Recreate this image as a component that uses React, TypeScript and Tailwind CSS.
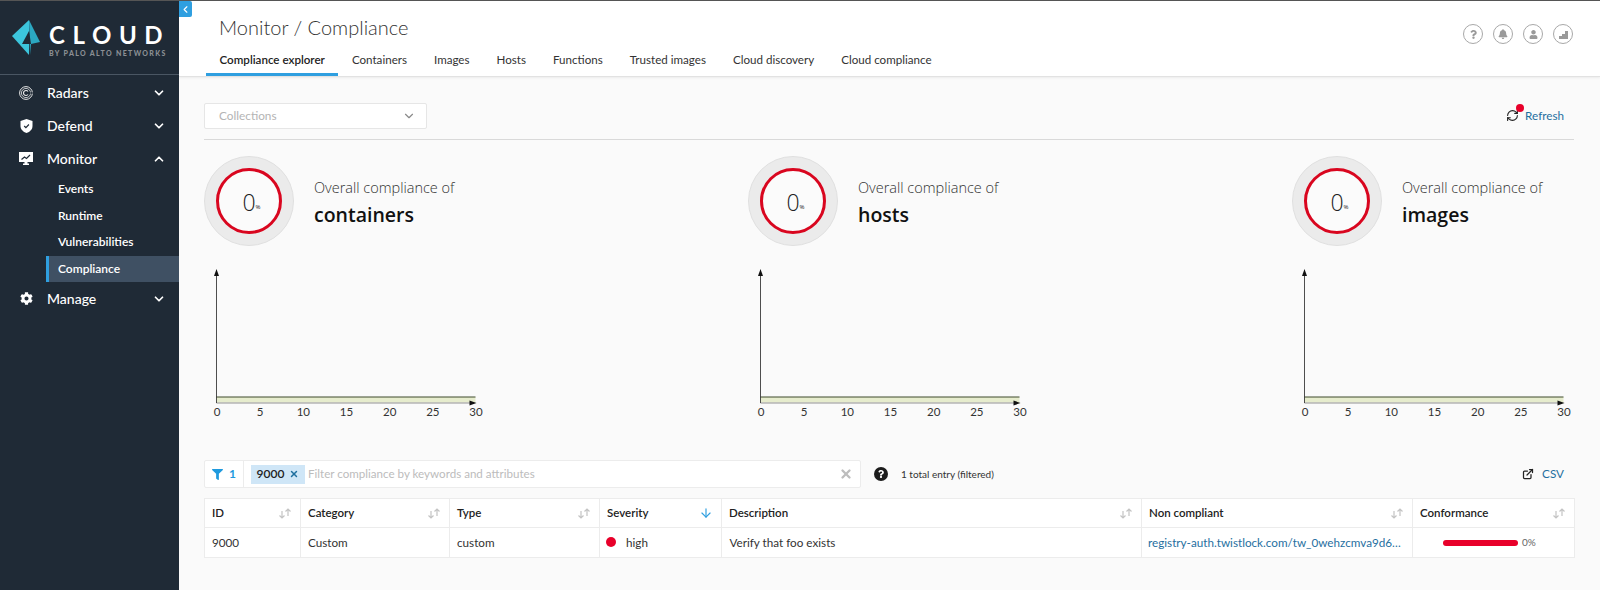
import { ChevronDown, ChevronLeft, ChevronUp, ArrowDown, RefreshCw, X, ExternalLink } from "lucide-react";
import { FaBell, FaCog, FaFilter, FaQuestion, FaUser } from "react-icons/fa";

const tabs = ["Compliance explorer", "Containers", "Images", "Hosts", "Functions", "Trusted images", "Cloud discovery", "Cloud compliance"];
const ticks = [0, 5, 10, 15, 20, 25, 30];

function RadarIcon() {
  return (
    <svg width="14" height="14" viewBox="0 0 14 14" fill="none" stroke="#e8e8e8">
      <circle cx="7" cy="7" r="6.4" strokeWidth="1" />
      <circle cx="7" cy="7" r="4.6" strokeWidth="0.8" />
      <path d="M9 5.5A2.5 2.5 0 1 0 9 8.5" strokeWidth="1.2" />
      <path d="M8 7h6" strokeWidth="1.2" stroke="#1f2a36" />
    </svg>
  );
}

function ShieldIcon() {
  return (
    <svg width="13" height="14" viewBox="0 0 13 14">
      <path d="M6.5 0 12.5 2v5c0 3.5-2.6 5.8-6 7-3.4-1.2-6-3.5-6-7V2z" fill="#fff" />
      <path d="M4.2 7l1.7 1.7 3-3.2" fill="none" stroke="#1f2a36" strokeWidth="1.2" />
    </svg>
  );
}

function MonitorIcon() {
  return (
    <svg width="14" height="13" viewBox="0 0 14 13">
      <path d="M0 0h14v10H8.5v1.5H10V13H4v-1.5h1.5V10H0z" fill="#fff" />
      <path d="M2.5 7.5 5.5 5l2 1.5 3.5-3.5" fill="none" stroke="#1f2a36" strokeWidth="1.2" />
    </svg>
  );
}

function SortIcon() {
  return (
    <svg width="14" height="11" viewBox="0 0 14 11" fill="none" stroke="#c4c4c4" strokeWidth="1.2">
      <path d="M4 3v7M1.5 7.5 4 10l2.5-2.5" />
      <path d="M10 8V1M7.5 3.5 10 1l2.5 2.5" />
    </svg>
  );
}

function NavItem({ icon, label, open }: { icon: React.ReactNode; label: string; open?: boolean }) {
  return (
    <div className="flex h-[33px] items-center pl-[19px] pr-[13px] text-[14px] font-medium text-white">
      <span className="flex w-[14px] justify-center">{icon}</span>
      <span className="ml-[14px] flex-1">{label}</span>
      {open ? <ChevronUp size={14} strokeWidth={3} /> : <ChevronDown size={14} strokeWidth={3} />}
    </div>
  );
}

function SubItem({ label, active }: { label: string; active?: boolean }) {
  return (
    <div className={`ml-[46px] flex h-[26.5px] items-center text-[12px] font-semibold text-white ${active ? "border-l-[3px] border-[#2f9fe0] bg-[#3f5063] pl-[9px]" : "pl-[12px]"}`}>
      {label}
    </div>
  );
}

function HeaderIcon({ children }: { children: React.ReactNode }) {
  return (
    <span className="flex h-[20px] w-[20px] items-center justify-center rounded-full border border-[#a8a8a8] text-[#9a9a9a]">
      {children}
    </span>
  );
}

function Chart() {
  return (
    <svg width="282" height="150" viewBox="0 0 282 150" className="mt-[23px]">
      <rect x="12.5" y="128" width="259" height="6" fill="#e6eccd" />
      <line x1="12.5" y1="128" x2="271.5" y2="128" stroke="#3f4a2c" strokeWidth="1" />
      <line x1="12.5" y1="134" x2="269.5" y2="134" stroke="#b5b5b5" strokeWidth="1.5" />
      <line x1="12.5" y1="4" x2="12.5" y2="134" stroke="#222" strokeWidth="0.8" />
      <path d="M12.5 0 15 7h-5z" fill="#111" />
      <path d="M272.5 134 265.5 131.5v5z" fill="#111" />
      {ticks.map((t, i) => (
        <text key={t} x={13 + i * 43.17} y="147" textAnchor="middle" fontSize="11.5" fill="#333" fontFamily="Lato, sans-serif">
          {t}
        </text>
      ))}
    </svg>
  );
}

function ComplianceCard({ kind }: { kind: string }) {
  return (
    <div className="w-[282px]">
      <div className="flex items-center">
        <div className="flex h-[90px] w-[90px] items-center justify-center rounded-full border border-[#e0e0e0] bg-[#ebebeb]">
          <div className="flex h-[66px] w-[66px] items-center justify-center rounded-full border-[3px] border-[#d9061f] bg-[#fbfbfb] pl-[5px] pt-[3px] font-['Open_Sans',sans-serif] text-[#222]">
            <span className="text-[23px] font-light leading-none">0</span>
            <span className="mt-[8px] text-[6px] leading-none">%</span>
          </div>
        </div>
        <div className="ml-[20px] pt-[4px] font-['Open_Sans',sans-serif]">
          <div className="text-[14.5px] font-light leading-[22px] text-[#333]">Overall compliance of</div>
          <div className="mt-[2px] text-[19.5px] font-semibold leading-[28px] text-[#111]">{kind}</div>
        </div>
      </div>
      <Chart />
    </div>
  );
}

function Th({ label, w, children }: { label: string; w: string; children?: React.ReactNode }) {
  return (
    <th className={`${w} h-[29px] border border-[#ececec] pl-[7px] pr-[8px] text-left text-[11.5px] font-semibold text-[#222]`}>
      <div className="flex items-center justify-between">
        <span>{label}</span>
        {children ?? <SortIcon />}
      </div>
    </th>
  );
}

export default function App() {
  return (
    <div className="relative flex h-[590px] w-[1600px] overflow-hidden bg-[#fafafa] font-['Lato',sans-serif] text-[#222]">
      <aside className="h-full w-[179px] shrink-0 bg-[#1f2a36]">
        <div className="flex h-[75px] items-center border-b border-[#4a5663] pl-[12px] pt-[1px]">
          <svg width="28" height="36" viewBox="0 0 28 36">
            <path d="M17 0V35L0 16z" fill="#3cc5dc" />
            <path d="M17 0 28 22 19 24 18 35z" fill="#2ba8c2" />
            <path d="M17 11 10 24h7z" fill="#1f2a36" />
            <path d="M17 11v13h2z" fill="#1f2a36" />
          </svg>
          <div className="ml-[9px] mt-[6px]">
            <div className="text-[24px] font-bold leading-[24px] tracking-[7.6px] text-white">CLOUD</div>
            <div className="mt-[2px] whitespace-nowrap text-[7px] font-black leading-[9px] tracking-[1.35px] text-[#8b8f94]">BY PALO ALTO NETWORKS</div>
          </div>
        </div>
        <div className="pt-[1px]">
          <NavItem icon={<RadarIcon />} label="Radars" />
          <NavItem icon={<ShieldIcon />} label="Defend" />
          <NavItem icon={<MonitorIcon />} label="Monitor" open />
          <div className="pt-[1px]">
            <SubItem label="Events" />
            <SubItem label="Runtime" />
            <SubItem label="Vulnerabilities" />
            <SubItem label="Compliance" active />
          </div>
          <NavItem icon={<FaCog size={13} />} label="Manage" />
        </div>
      </aside>

      <main className="flex min-w-0 flex-1 flex-col">
        <header className="h-[77px] shrink-0 border-b border-[#e2e2e2] bg-white shadow-[0_1px_2px_rgba(0,0,0,0.06)]">
          <div className="flex h-[45px] items-start justify-between pl-[40px] pr-[27px]">
            <h1 className="pt-[14px] text-[20px] font-light leading-[26px] text-[#333]">Monitor / Compliance</h1>
            <div className="flex gap-[10px] pt-[24px]">
              <HeaderIcon><FaQuestion size={9} /></HeaderIcon>
              <HeaderIcon><FaBell size={10} /></HeaderIcon>
              <HeaderIcon><FaUser size={9} /></HeaderIcon>
              <HeaderIcon>
                <svg width="11" height="9" viewBox="0 0 11 9" fill="currentColor"><path d="M1 9V6h3V4h3V1h3v8z" /></svg>
              </HeaderIcon>
            </div>
          </div>
          <nav className="ml-[27px] flex h-[31px]">
            {tabs.map((t, i) => (
              <span key={t} className={`flex h-[31px] items-center whitespace-nowrap px-[13.5px] text-[11.6px] ${i === 0 ? "border-b-[3px] border-[#2f9fe0] pt-[2px] font-semibold text-[#222]" : "pb-[1px] text-[#333]"}`}>
                {t}
              </span>
            ))}
          </nav>
        </header>

        <div className="flex flex-1 flex-col pl-[25px] pr-[26px] pt-[26px]">
          <div className="flex h-[37px] items-start justify-between border-b border-[#d9d9d9]">
            <div className="flex h-[26px] w-[223px] items-center justify-between rounded-[2px] border border-[#e6e6e6] bg-white pl-[14px] pr-[10px] text-[11.8px] text-[#b4b4b4]">
              Collections
              <ChevronDown size={14} strokeWidth={2} className="text-[#8a8a8a]" />
            </div>
            <div className="relative mt-[4px] flex items-center pr-[10px] text-[11.7px] text-[#1f6f9f]">
              <RefreshCw size={13} strokeWidth={2} className="mr-[6px] text-[#222]" />
              Refresh
              <span className="absolute left-[10px] top-[-3px] h-[8px] w-[8px] rounded-full bg-[#e8002a]" />
            </div>
          </div>

          <div className="mt-[16px] flex justify-between">
            <ComplianceCard kind="containers" />
            <ComplianceCard kind="hosts" />
            <ComplianceCard kind="images" />
          </div>

          <div className="mt-[41px] flex h-[28px] items-center">
            <div className="flex h-[28px] w-[657px] items-center rounded-[2px] border border-[#ececec] bg-white">
              <div className="flex h-full w-[39px] shrink-0 items-center justify-center gap-[6px] border-r border-[#ececec] text-[12px] font-bold text-[#1f9ade]">
                <FaFilter size={11} />
                1
              </div>
              <div className="ml-[7px] flex h-[19px] w-[54px] items-center justify-center gap-[5px] bg-[#cfe6f7] text-[12px] font-semibold text-[#222]">
                9000
                <X size={10} strokeWidth={3.5} className="text-[#1f6f9f]" />
              </div>
              <span className="ml-[3px] flex-1 text-[11.6px] text-[#bcbcbc]">Filter compliance by keywords and attributes</span>
              <X size={14} strokeWidth={4} className="mr-[7px] text-[#bdbdbd]" />
            </div>
            <span className="ml-[13px] flex h-[14px] w-[14px] items-center justify-center rounded-full bg-[#1c1c1c] text-white">
              <FaQuestion size={8} />
            </span>
            <span className="ml-[13px] flex-1 text-[10px] text-[#333]">1 total entry (filtered)</span>
            <div className="flex items-center gap-[8px] pr-[10px] text-[11.7px] text-[#1f6f9f]">
              <ExternalLink size={12} strokeWidth={2.5} className="text-[#222]" />
              CSV
            </div>
          </div>

          <table className="mt-[10px] w-[1370px] table-fixed border-collapse bg-white">
            <thead>
              <tr>
                <Th label="ID" w="w-[96px]" />
                <Th label="Category" w="w-[149px]" />
                <Th label="Type" w="w-[150px]" />
                <Th label="Severity" w="w-[122px]">
                  <ArrowDown size={14} strokeWidth={2} className="text-[#2f9fe0]" />
                </Th>
                <Th label="Description" w="w-[420px]" />
                <Th label="Non compliant" w="w-[271px]" />
                <Th label="Conformance" w="w-[162px]" />
              </tr>
            </thead>
            <tbody className="text-[11.7px] text-[#333]">
              <tr className="h-[30px]">
                <td className="border border-[#ececec] pl-[7px]">9000</td>
                <td className="border border-[#ececec] pl-[7px]">Custom</td>
                <td className="border border-[#ececec] pl-[7px]">custom</td>
                <td className="border border-[#ececec] px-[6px]">
                  <div className="flex items-center gap-[10px]">
                    <span className="h-[10px] w-[10px] rounded-full bg-[#e8002a]" />
                    high
                  </div>
                </td>
                <td className="border border-[#ececec] pl-[7.5px]">Verify that foo exists</td>
                <td className="whitespace-nowrap border border-[#ececec] pl-[6px] text-[#1f6f9f]">registry-auth.twistlock.com/tw_0wehzcmva9d6…</td>
                <td className="border border-[#ececec] pl-[30px]">
                  <div className="flex items-center gap-[4px]">
                    <span className="h-[6px] w-[75px] rounded-full bg-[#e8002a]" />
                    <span className="text-[10px] text-[#666]">0%</span>
                  </div>
                </td>
              </tr>
            </tbody>
          </table>
        </div>
      </main>

      <div className="absolute inset-x-0 top-0 h-[1px] bg-[#555]" />
      <div className="absolute left-[179px] top-[1px] flex h-[16px] w-[13px] items-center justify-center rounded-r-[2px] bg-[#2f9fe0] text-white">
        <ChevronLeft size={11} strokeWidth={2.5} />
      </div>
    </div>
  );
}
